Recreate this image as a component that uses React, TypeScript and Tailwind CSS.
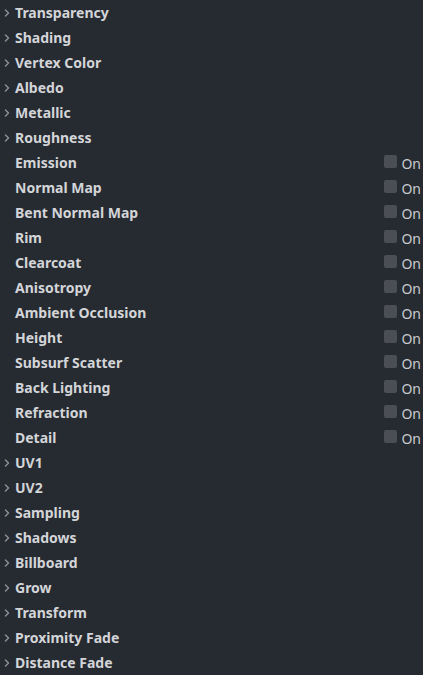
import React from "react";

type Row = { label: string; kind: "section" | "toggle" };

const rows: Row[] = [
  ...["Transparency", "Shading", "Vertex Color", "Albedo", "Metallic", "Roughness"].map((l) => ({ label: l, kind: "section" as const })),
  ...["Emission", "Normal Map", "Bent Normal Map", "Rim", "Clearcoat", "Anisotropy", "Ambient Occlusion", "Height", "Subsurf Scatter", "Back Lighting", "Refraction", "Detail"].map((l) => ({ label: l, kind: "toggle" as const })),
  ...["UV1", "UV2", "Sampling", "Shadows", "Billboard", "Grow", "Transform", "Proximity Fade", "Distance Fade"].map((l) => ({ label: l, kind: "section" as const })),
];

function Chevron() {
  return (
    <svg width="6" height="8" viewBox="0 0 6 8" className="shrink-0">
      <path d="M1.5 1 L4.5 4 L1.5 7" fill="none" stroke="#8a8e95" strokeWidth="1.5" strokeLinecap="round" strokeLinejoin="round" />
    </svg>
  );
}

export default function App() {
  return (
    <div
      className="w-[423px] h-[675px] bg-[#262a31] overflow-hidden flex flex-col"
      style={{ fontFamily: '"Noto Sans", sans-serif' }}
    >
      {rows.map((r) => (
        <div key={r.label} className="h-[25px] shrink-0 flex items-center">
          <div className="w-[15px] pl-[4px] flex items-center">{r.kind === "section" ? <Chevron /> : null}</div>
          <span className="text-[14px] font-bold text-[#d3d5d8] leading-none flex-1">{r.label}</span>
          {r.kind === "toggle" ? (
            <div className="flex items-center pr-[2px] mt-[2px]">
              <div className="w-[13px] h-[13px] rounded-[2px] bg-[#4b4e54] mr-[4px] -mt-[4px]" />
              <span className="text-[14px] text-[#c9cbce] leading-none">On</span>
            </div>
          ) : null}
        </div>
      ))}
    </div>
  );
}
